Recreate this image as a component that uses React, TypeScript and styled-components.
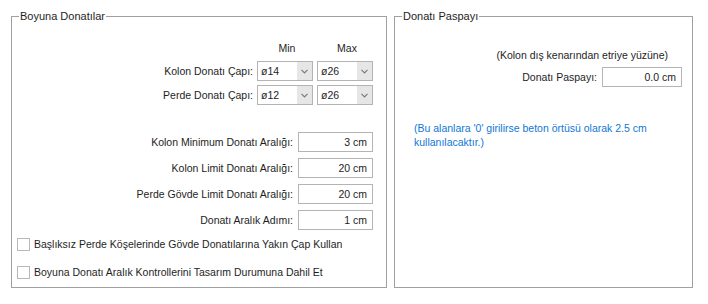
import styled, { createGlobalStyle } from "styled-components";

const GlobalStyle = createGlobalStyle`
  body {
    margin: 0;
    background: #fff;
    font-family: "Liberation Sans", Arial, sans-serif;
    font-size: 10.5px;
    color: #1e1e1e;
  }
`;

const Page = styled.div`
  display: flex;
  gap: 7px;
  padding: 10px 0 0 11px;
`;

const Group = styled.fieldset<{ width: number }>`
  box-sizing: border-box;
  width: ${(props) => props.width}px;
  height: 278px;
  margin: 0;
  padding: 0;
  border: 1px solid #a0a0a0;
  display: flex;
  flex-direction: column;
  min-width: 0;
`;

const Legend = styled.legend`
  margin-left: 7px;
  padding: 0 1px;
  line-height: 13px;
  font-size: 11px;
  color: #1e1e1e;
`;

const HeadRow = styled.div`
  display: flex;
  justify-content: flex-end;
  gap: 4px;
  padding-right: 13px;
  margin-top: 19px;
  line-height: 13px;
`;

const HeadCell = styled.span`
  width: 56px;
  text-align: center;
  padding-left: 4px;
  box-sizing: border-box;
`;

const Row = styled.div<{ mt: number; pr?: number }>`
  display: flex;
  justify-content: flex-end;
  align-items: center;
  gap: 5px;
  padding-right: ${(props) => props.pr ?? 13}px;
  margin-top: ${(props) => props.mt}px;
  height: 20px;
`;

const Label = styled.span`
  white-space: nowrap;
`;

const Combo = styled.div`
  box-sizing: border-box;
  width: 56px;
  height: 20px;
  border: 1px solid #b4b4b4;
  display: flex;
  align-items: center;
  margin-left: -1px;
`;

const ComboText = styled.span`
  flex: 1;
  padding-left: 3px;
`;

const ComboButton = styled.span`
  width: 15px;
  height: 18px;
  background: #e6e6e6;
  display: flex;
  align-items: center;
  justify-content: center;
`;

const Field = styled.div<{ width: number }>`
  box-sizing: border-box;
  width: ${(props) => props.width}px;
  height: 20px;
  border: 1px solid #b4b4b4;
  display: flex;
  align-items: center;
  justify-content: flex-end;
  padding-right: 5px;
`;

const CheckRow = styled.label<{ mt: number }>`
  display: flex;
  align-items: center;
  gap: 4px;
  margin: ${(props) => props.mt}px 0 0 5px;
  line-height: 13px;
`;

const Box = styled.span`
  box-sizing: border-box;
  width: 13px;
  height: 13px;
  border: 1px solid #b8b8b8;
  background: #fff;
`;

const Note = styled.div<{ mt: number; pr: number }>`
  margin-top: ${(props) => props.mt}px;
  padding-right: ${(props) => props.pr}px;
  text-align: right;
  line-height: 13px;
`;

const Hint = styled.div`
  margin: 34px 0 0 19px;
  width: 250px;
  line-height: 14px;
  color: #0f78d4;
`;

const Chevron = () => (
  <svg width="7" height="5" viewBox="0 0 7 5">
    <path d="M0.5 0.8 L3.5 3.8 L6.5 0.8" fill="none" stroke="#7a7a7a" strokeWidth="1.2" />
  </svg>
);

const Select = ({ value }: { value: string }) => (
  <Combo>
    <ComboText>{value}</ComboText>
    <ComboButton>
      <Chevron />
    </ComboButton>
  </Combo>
);

const diameters = [
  { label: "Kolon Donatı Çapı:", min: "ø14", max: "ø26" },
  { label: "Perde Donatı Çapı:", min: "ø12", max: "ø26" },
];

const spacings = [
  { label: "Kolon Minimum Donatı Aralığı:", value: "3 cm" },
  { label: "Kolon Limit Donatı Aralığı:", value: "20 cm" },
  { label: "Perde Gövde Limit Donatı Aralığı:", value: "20 cm" },
  { label: "Donatı Aralık Adımı:", value: "1 cm" },
];

const checks = [
  "Başlıksız Perde Köşelerinde Gövde Donatılarına Yakın Çap Kullan",
  "Boyuna Donatı Aralık Kontrollerini Tasarım Durumuna Dahil Et",
];

const App = () => {
  return (
    <Page>
      <GlobalStyle />
      <Group width={376}>
        <Legend>Boyuna Donatılar</Legend>
        <HeadRow>
          <HeadCell>Min</HeadCell>
          <HeadCell>Max</HeadCell>
        </HeadRow>
        {diameters.map((d, idx) => (
          <Row key={`dia_${idx}`} mt={idx === 0 ? 6 : 4}>
            <Label>{d.label}</Label>
            <Select value={d.min} />
            <Select value={d.max} />
          </Row>
        ))}
        {spacings.map((s, idx) => (
          <Row key={`sp_${idx}`} mt={idx === 0 ? 27 : 6}>
            <Label>{s.label}</Label>
            <Field width={75}>{s.value}</Field>
          </Row>
        ))}
        {checks.map((c, idx) => (
          <CheckRow key={`chk_${idx}`} mt={idx === 0 ? 8 : 15}>
            <Box />
            {c}
          </CheckRow>
        ))}
      </Group>
      <Group width={299}>
        <Legend>Donatı Paspayı</Legend>
        <Note mt={26} pr={24}>
          (Kolon dış kenarından etriye yüzüne)
        </Note>
        <Row mt={5} pr={10}>
          <Label>Donatı Paspayı:</Label>
          <Field width={80}>0.0 cm</Field>
        </Row>
        <Hint>(Bu alanlara '0' girilirse beton örtüsü olarak 2.5 cm kullanılacaktır.)</Hint>
      </Group>
    </Page>
  );
};

export default App;
